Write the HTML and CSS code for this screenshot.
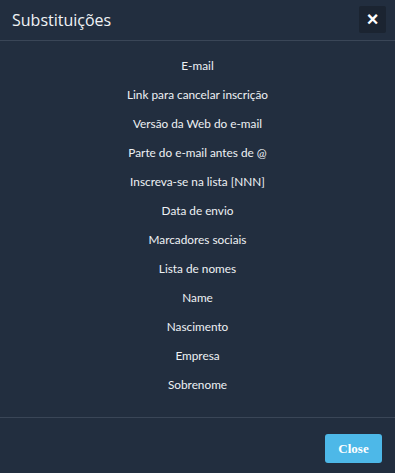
FILE: index.html
```html
<!DOCTYPE html>
<html lang="pt">
<head>
    <meta charset="UTF-8">
    <meta name="viewport" content="width=device-width, initial-scale=1.0">
    <link rel="stylesheet" href="styles.css">
</head>
<body>
    <div class="modal">
        <div class="modal-header">
            <h4 class="modal-title">Substituições</h4>
            <button class="close-x" type="button">&times;</button>
        </div>
        <div class="modal-body">
            <ul class="subs-list">
                <li>E-mail</li>
                <li>Link para cancelar inscrição</li>
                <li>Versão da Web do e-mail</li>
                <li>Parte do e-mail antes de @</li>
                <li>Inscreva-se na lista [NNN]</li>
                <li>Data de envio</li>
                <li>Marcadores sociais</li>
                <li>Lista de nomes</li>
                <li>Name</li>
                <li>Nascimento</li>
                <li>Empresa</li>
                <li>Sobrenome</li>
            </ul>
        </div>
        <div class="modal-footer">
            <button class="btn-close" type="button">Close</button>
        </div>
    </div>
</body>
</html>
```
FILE: styles.css
```css
body {
    margin: 0;
    background-color: #222e3f;
    font-family: "Open Sans", "Noto Sans", sans-serif;
    color: #e8ecf0;
}

.modal {
    width: 395px;
    height: 473px;
    display: flex;
    flex-direction: column;
}

.modal-header {
    height: 40px;
    display: flex;
    align-items: center;
    justify-content: space-between;
    padding: 0 9px 0 12px;
    border-bottom: 1px solid #3a4657;
}

.modal-title {
    margin: 0;
    font-size: 16px;
    font-weight: normal;
    color: #f0f3f6;
    margin-top: -1px;
}

.close-x {
    width: 27px;
    height: 27px;
    margin-top: -1px;
    border: none;
    border-radius: 2px;
    background-color: #1b2431;
    color: #fff;
    font-size: 20px;
    font-weight: bold;
    line-height: 27px;
    padding: 0;
    cursor: pointer;
}

.modal-body {
    height: 376px;
    border-bottom: 1px solid #3a4657;
}

.subs-list {
    list-style: none;
    margin: 0;
    padding: 16px 0 0 0;
    text-align: center;
}

.subs-list li {
    height: 29px;
    line-height: 18px;
    font-family: Lato, "Open Sans", sans-serif;
    font-size: 11.8px;
    color: #eef1f4;
}

.modal-footer {
    display: flex;
    justify-content: flex-end;
    padding: 16px 13px 0 0;
}

.btn-close {
    width: 57px;
    height: 29px;
    border: none;
    border-radius: 3px;
    background-color: #4db8e8;
    color: #fff;
    font-family: "Liberation Serif", serif;
    font-weight: bold;
    font-size: 13px;
    padding: 0;
    cursor: pointer;
}
```
